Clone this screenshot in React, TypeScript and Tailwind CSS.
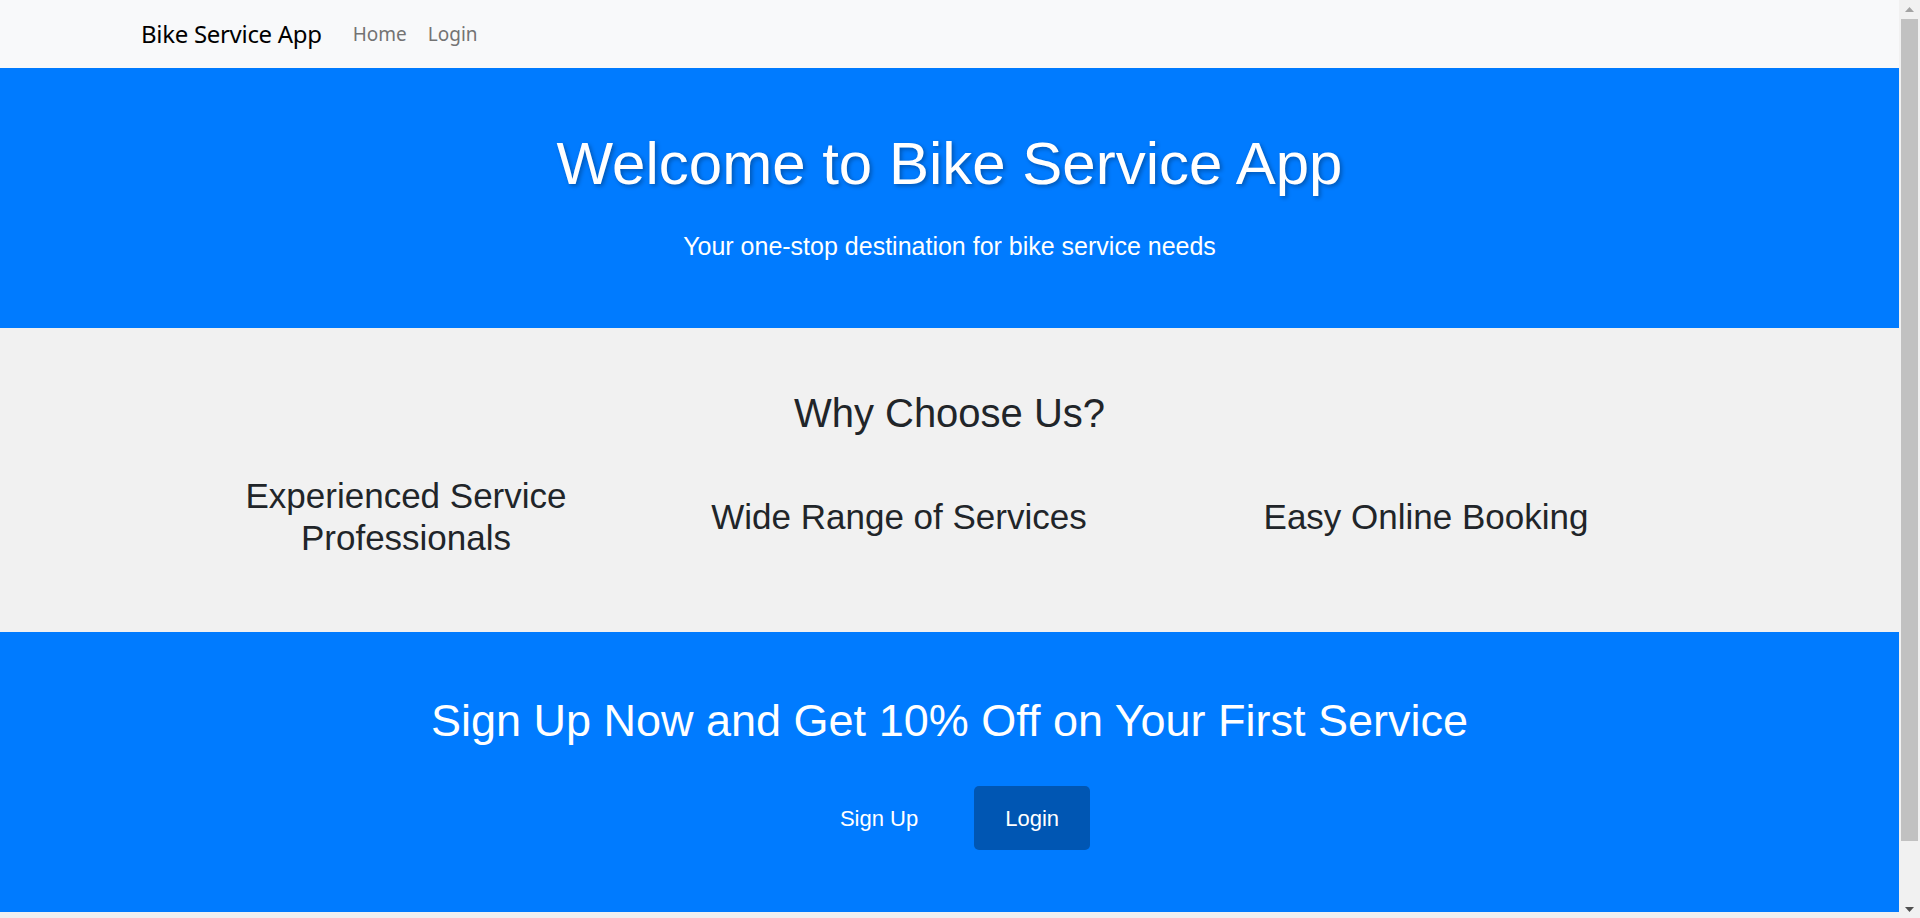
export default function App() {
  const features = [
    { title: "Experienced Service Professionals", width: "w-[434px]" },
    { title: "Wide Range of Services", width: "w-[552px]" },
    { title: "Easy Online Booking", width: "w-[502px]" },
  ];

  return (
    <div className="min-h-screen bg-[#f0f0f0] font-['Liberation_Sans',Arial,sans-serif]">
      <div className="mr-[21px]">
        {/* Navbar */}
        <nav className="h-[68px] bg-[#f8f9fa] flex items-center pl-[141px] font-['Noto_Sans','Open_Sans',sans-serif]">
          <a href="#" className="text-[24px] leading-[36px] text-black mr-[31px] tracking-[-0.3px]">
            Bike Service App
          </a>
          <a href="#" className="text-[19px] text-[#737373] mr-[21px]">
            Home
          </a>
          <a href="#" className="text-[19px] text-[#737373]">
            Login
          </a>
        </nav>

        {/* Hero */}
        <section className="bg-[#007bff] text-white text-center pt-[60px] pb-[63px]">
          <h1 className="text-[60px] leading-[72px] [text-shadow:2px_2px_4px_rgba(0,0,0,0.3)]">
            Welcome to Bike Service App
          </h1>
          <p className="mt-[27px] text-[25px] leading-[38px]">
            Your one-stop destination for bike service needs
          </p>
        </section>

        {/* Features */}
        <section className="bg-[#f1f1f1] text-[#212529] pt-[61px] pb-[73px]">
          <h2 className="text-center text-[40px] leading-[48px]">Why Choose Us?</h2>
          <div className="mt-[38px] flex justify-center">
            <div className="w-[1488px] mr-[33px] flex items-center min-h-[84px]">
              {features.map((f) => (
                <div key={f.title} className={`${f.width} shrink-0 text-center`}>
                  <h3 className="text-[35px] leading-[42px] px-[50px]">{f.title}</h3>
                </div>
              ))}
            </div>
          </div>
        </section>

        {/* Call to action */}
        <section className="bg-[#007bff] text-white text-center pt-[62px] pb-[62px]">
          <h2 className="text-[45px] leading-[54px]">
            Sign Up Now and Get 10% Off on Your First Service
          </h2>
          <div className="mt-[38px] flex justify-center items-center gap-[25px]">
            <button className="h-[64px] px-[31px] text-[22px] text-white rounded-[5px]">
              Sign Up
            </button>
            <button className="h-[64px] px-[31px] text-[22px] text-white bg-[#0056b3] rounded-[5px]">
              Login
            </button>
          </div>
        </section>

        <footer className="h-[75px] bg-[#f0f0f0]" />
      </div>

      {/* Window scrollbar */}
      <div className="fixed top-0 right-0 h-screen w-[21px] bg-[#f1f1f1] flex flex-col items-center">
        <div className="h-[19px] flex items-center justify-center">
          <svg width="9" height="5" viewBox="0 0 9 5">
            <path d="M0 5 L4.5 0 L9 5 Z" fill="#a3a3a3" />
          </svg>
        </div>
        <div className="w-[17px] h-[822px] bg-[#c1c1c1]" />
        <div className="flex-1 flex items-end justify-center pb-[6px]">
          <svg width="9" height="5" viewBox="0 0 9 5">
            <path d="M0 0 L9 0 L4.5 5 Z" fill="#505050" />
          </svg>
        </div>
      </div>
    </div>
  );
}
